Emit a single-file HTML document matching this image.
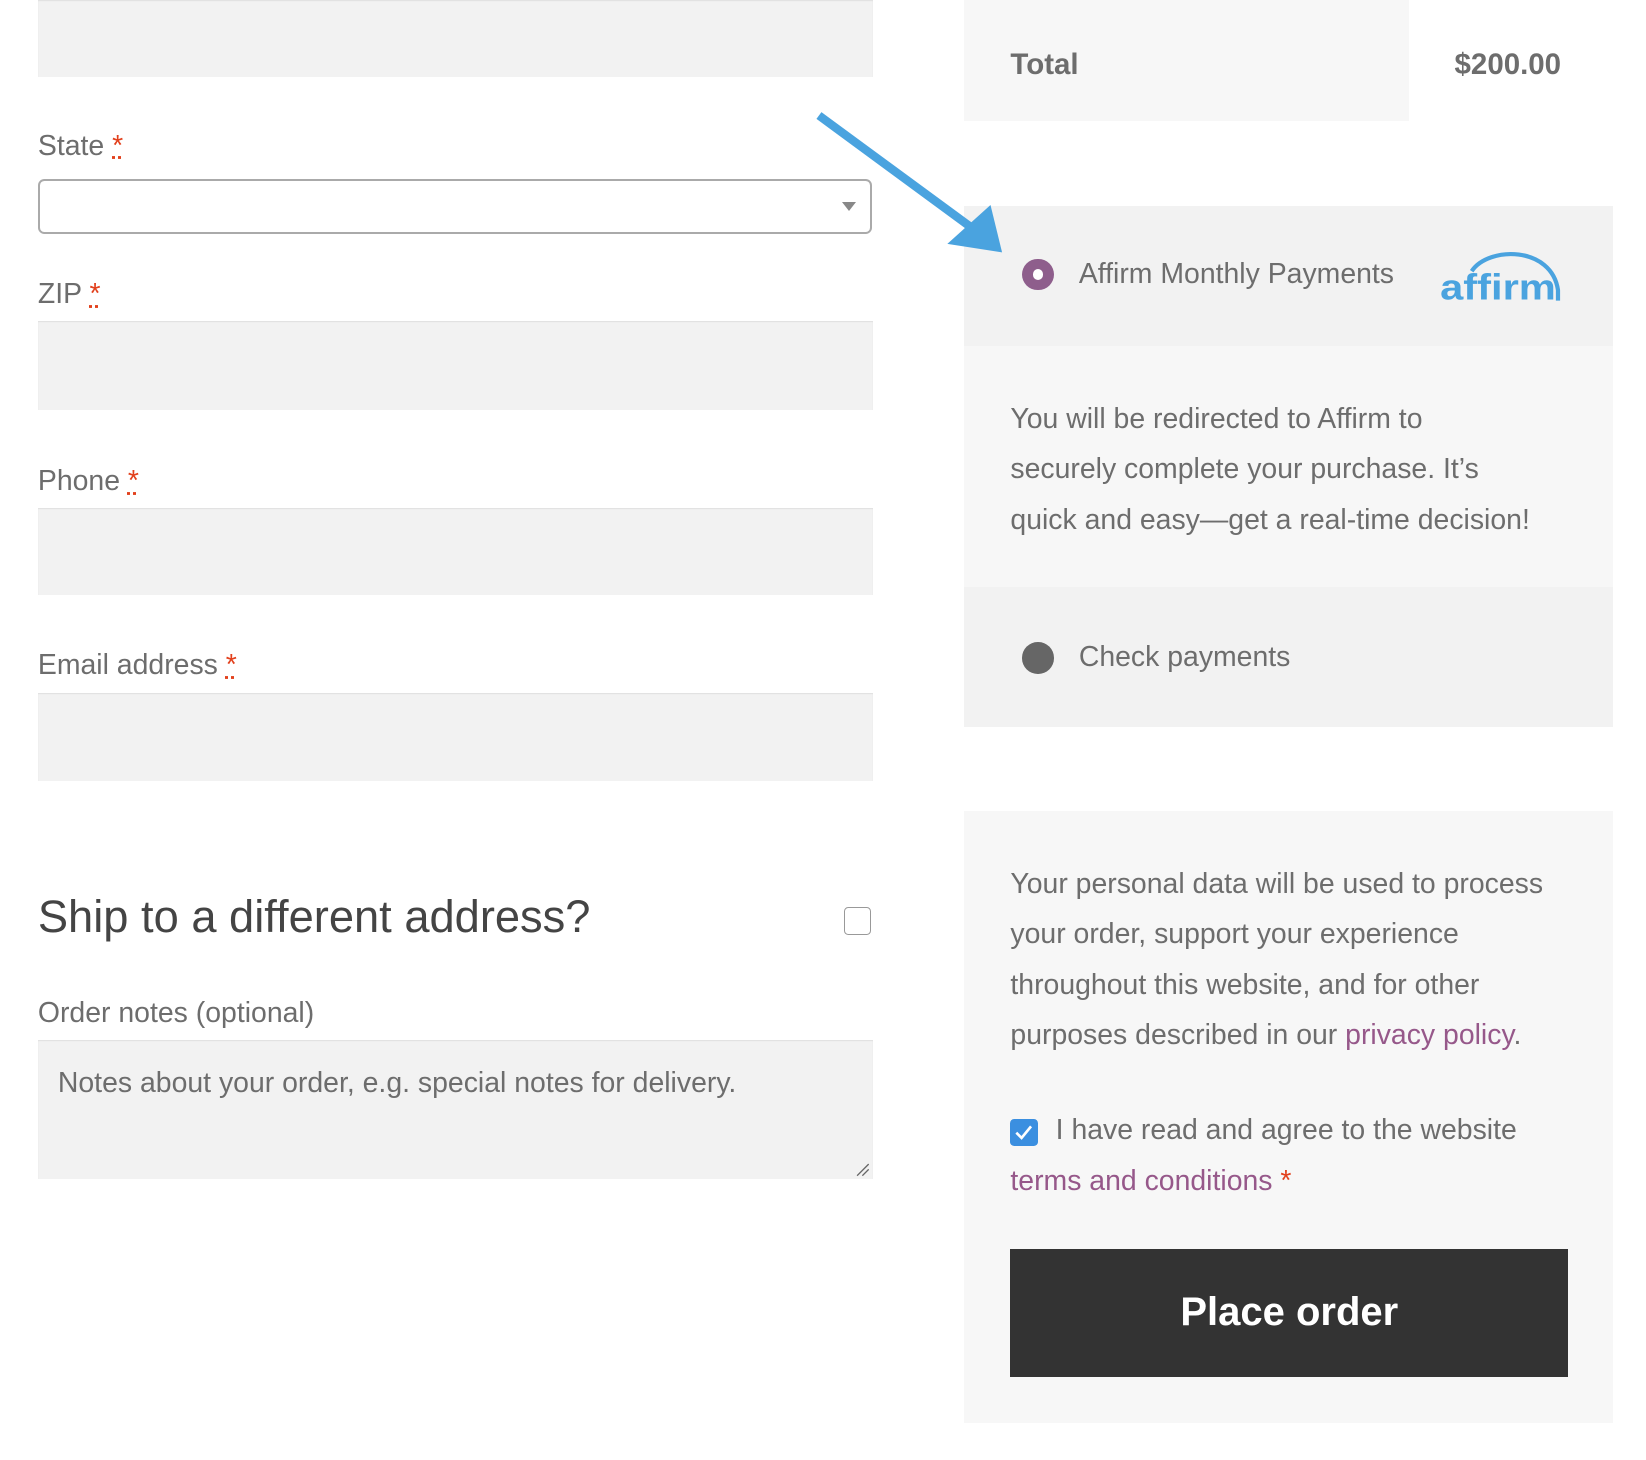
<!DOCTYPE html>
<html><head><meta charset="utf-8"><style>
html,body{margin:0;padding:0;background:#fff;overflow:hidden}
body{width:1646px;height:1460px}
#w{position:relative;width:1564px;height:1388px;zoom:1.0525;font-family:"Liberation Sans",sans-serif;color:#6d6d6d}
.a{position:absolute}
.inp{position:absolute;left:36px;width:793px;background:#f2f2f2;box-shadow:inset 0 1px 1px rgba(0,0,0,.08)}
.lbl{position:absolute;left:36px;font-size:27px;line-height:30px;color:#6d6d6d}
.req{color:#e2401c;text-decoration:underline dotted;}
.t{font-size:27px;line-height:48px}
a{color:#96588a;text-decoration:none}
</style></head><body><div id="w">
<div class="inp" style="top:0;height:73px"></div>
<div class="lbl" style="top:124px">State <span class="req">*</span></div>
<div class="a" style="left:36px;top:170px;width:789px;height:49px;border:2px solid #aaa;border-radius:6px;background:#fff"></div>
<div class="a" style="left:800px;top:192px;width:0;height:0;border-left:7px solid transparent;border-right:7px solid transparent;border-top:9px solid #888"></div>
<div class="lbl" style="top:265px">ZIP <span class="req">*</span></div>
<div class="inp" style="top:305px;height:85px"></div>
<div class="lbl" style="top:443px">Phone <span class="req">*</span></div>
<div class="inp" style="top:483px;height:82px"></div>
<div class="lbl" style="top:618px">Email address <span class="req">*</span></div>
<div class="inp" style="top:658px;height:84px"></div>
<div class="a" style="left:36px;top:846px;font-size:43px;line-height:52px;color:#444;font-weight:300">Ship to a different address?</div>
<div class="a" style="left:802px;top:862px;width:24px;height:24px;border:1.5px solid #999;border-radius:4px;background:#fff"></div>
<div class="lbl" style="top:948px">Order notes (optional)</div>
<div class="inp" style="top:988px;height:132px"></div>
<div class="a" style="left:55px;top:1014px;font-size:27px;line-height:32px;color:#6d6d6d">Notes about your order, e.g. special notes for delivery.</div>
<svg class="a" style="left:812px;top:1104px" width="14" height="14"><path d="M2 13L13 2M7 13L13 7" stroke="#666" stroke-width="1.3"/></svg>

<div class="a" style="left:916px;top:0;width:423px;height:115px;background:#f7f7f7"></div>
<div class="a" style="left:960px;top:46px;font-size:28px;font-weight:bold;color:#6d6d6d">Total</div>
<div class="a" style="left:1382px;top:46px;font-size:28px;font-weight:bold;color:#6d6d6d">$200.00</div>

<div class="a" style="left:916px;top:196px;width:617px;height:133px;background:#f2f2f2"></div>
<div class="a" style="left:916px;top:329px;width:617px;height:229px;background:#f7f7f7"></div>
<div class="a" style="left:916px;top:558px;width:617px;height:133px;background:#f2f2f2"></div>
<div class="a" style="left:916px;top:771px;width:617px;height:581px;background:#f7f7f7"></div>

<svg class="a" style="left:760px;top:100px" width="220" height="160"><line x1="18" y1="10" x2="165" y2="118" stroke="#4aa3df" stroke-width="8"/><polygon points="140,132 181,95 192,140" fill="#4aa3df"/></svg>

<div class="a" style="left:971px;top:246px;width:30px;height:30px;border-radius:50%;background:#8e5e8c"></div>
<div class="a" style="left:981px;top:256px;width:10px;height:10px;border-radius:50%;background:#fff"></div>
<div class="a" style="left:1025px;top:245px;font-size:27px;line-height:32px">Affirm Monthly Payments</div>
<svg class="a" style="left:1366px;top:236px" width="122" height="56"><path d="M32 22C48 -2 108 -2 114 40V50" fill="none" stroke="#4aa3df" stroke-width="4"/><text x="2" y="49" font-family="Liberation Sans,sans-serif" font-weight="bold" font-size="34" fill="#4aa3df" textLength="110" lengthAdjust="spacingAndGlyphs">affirm</text></svg>

<div class="a t" style="left:960px;top:374px">You will be redirected to Affirm to<br>securely complete your purchase. It’s<br>quick and easy—get a real-time decision!</div>

<div class="a" style="left:971px;top:610px;width:30px;height:30px;border-radius:50%;background:#666"></div>
<div class="a" style="left:1025px;top:609px;font-size:27px;line-height:32px">Check payments</div>

<div class="a t" style="left:960px;top:816px">Your personal data will be used to process<br>your order, support your experience<br>throughout this website, and for other<br>purposes described in our <a>privacy policy</a>.</div>

<div class="a" style="left:960px;top:1063px;width:26px;height:26px;border-radius:4px;background:#3b8fe0"></div>
<svg class="a" style="left:960px;top:1063px" width="26" height="26"><path d="M6 13l5 5 9-11" fill="none" stroke="#fff" stroke-width="2.5"/></svg>
<div class="a t" style="left:1003px;top:1050px">I have read and agree to the website</div>
<div class="a t" style="left:960px;top:1098px"><a>terms and conditions</a> <span style="color:#e2401c">*</span></div>

<div class="a" style="left:960px;top:1187px;width:530px;height:121px;background:#333;color:#fff;font-size:38px;font-weight:bold;text-align:center;line-height:121px">Place order</div>
</div></body></html>
